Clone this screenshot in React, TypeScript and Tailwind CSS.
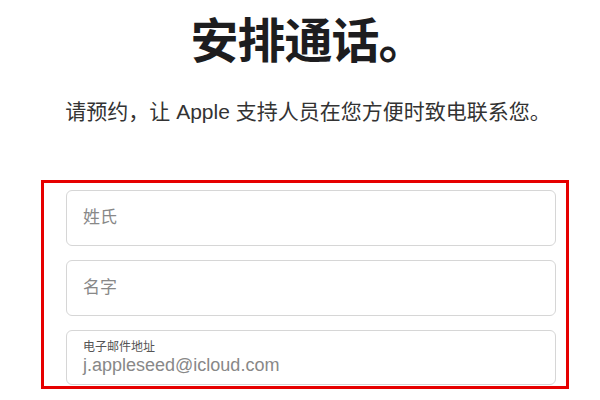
export default function App() {
  return (
    <div className="min-h-[400px] w-full overflow-hidden bg-white font-['Liberation_Sans','Noto_Sans_CJK_SC',sans-serif] text-[#1d1d1f]">
      <div className="flex flex-col items-center pl-[16px]">
        <h1 className="mt-[10px] text-[48px] font-bold leading-[64px] tracking-[-1px]">安排通话。</h1>
        <p className="mt-[23px] text-[21px] leading-[30px] text-[#333]">请预约，让 Apple 支持人员在您方便时致电联系您。</p>
      </div>

      <div className="ml-[41px] mt-[53px] flex h-[209px] w-[528px] flex-col gap-[14px] overflow-hidden border-[3px] border-[#e60000] pl-[22px] pr-[10px] pt-[7px]">
        <div className="flex h-[56px] shrink-0 items-center rounded-[6px] border border-[#d6d6d6] px-4 text-[17px] text-[#888]">
          姓氏
        </div>
        <div className="flex h-[56px] shrink-0 items-center rounded-[6px] border border-[#d6d6d6] px-4 text-[17px] text-[#888]">
          名字
        </div>
        <div className="flex h-[55px] shrink-0 flex-col justify-center rounded-[6px] border border-[#d6d6d6] px-4">
          <span className="text-[12px] leading-[14px] text-[#555]">电子邮件地址</span>
          <span className="text-[18px] leading-[22px] text-[#888]">j.appleseed@icloud.com</span>
        </div>
      </div>
    </div>
  );
}
